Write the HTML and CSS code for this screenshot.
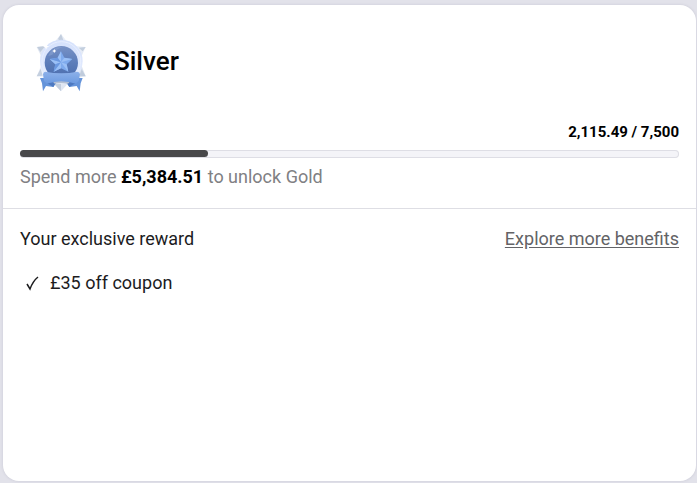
FILE: index.html
```html
<!DOCTYPE html>
<html lang="en">
<head>
    <meta charset="utf-8">
    <title>Silver rewards</title>
    <link rel="stylesheet" href="styles.css">
</head>
<body>
    <main class="card">
        <section class="status">
            <div class="tier">
                <svg class="badge" viewBox="0 0 192 210" aria-hidden="true">
                    <defs>
                        <linearGradient id="ray" x1="0" y1="0" x2="1" y2="1">
                            <stop offset="0" stop-color="#d3dbe9"/>
                            <stop offset=".45" stop-color="#f0f4fc"/>
                            <stop offset="1" stop-color="#cfd9e8"/>
                        </linearGradient>
                        <linearGradient id="ring" x1="0" y1="0" x2="0" y2="1">
                            <stop offset="0" stop-color="#d5e1fc"/>
                            <stop offset="1" stop-color="#e6eeff"/>
                        </linearGradient>
                        <linearGradient id="disc" x1="0" y1="0" x2="0" y2="1">
                            <stop offset="0" stop-color="#7892c6"/>
                            <stop offset=".5" stop-color="#5c7dba"/>
                            <stop offset="1" stop-color="#4a6cad"/>
                        </linearGradient>
                        <linearGradient id="ribbon" x1="0" y1="0" x2="0" y2="1">
                            <stop offset="0" stop-color="#8db1ea"/>
                            <stop offset="1" stop-color="#6c9ae0"/>
                        </linearGradient>
                    </defs>
                    <path d="M93 18L112 42 137 54 167 57 156 82 156 116 167 145 140 150 116 164 93 190 70 164 46 150 20 145 32 116 32 82 20 57 50 54 74 42Z" fill="url(#ray)"/>
                    <path d="M93 18L100 36 93 42 84 33ZM22 57L46 54 31 72ZM167 57L146 59 158 70ZM20 145L32 122 38 143ZM167 145L155 124 148 143ZM72 168H93V190Z" fill="#b7c4d6" opacity=".75"/>
                    <circle cx="94" cy="99" r="64" fill="url(#ring)"/>
                    <circle cx="94" cy="99" r="58" fill="none" stroke="#e8efff" stroke-width="3"/>
                    <circle cx="94" cy="104" r="50" fill="url(#disc)"/>
                    <path d="M54 84Q67 54 99 57Q76 63 67 80Z" fill="#9bb2de" opacity=".35"/>
                    <path d="M93 70L103 89 127 93 110 109 115 131 93 121 71 131 76 109 59 93 83 89Z" fill="#7fabee"/>
                    <path d="M93 70V103L83 89ZM127 93L93 103 103 89ZM115 131L93 103 110 109ZM71 131L93 103V121ZM59 93L93 103 76 109Z" fill="#9bc0f6"/>
                    <path d="M59 93L93 103 83 89ZM71 131L93 103 76 109Z" fill="#6b98e0"/>
                    <path d="M30 150L51 150 78 166 70 177 48 174 39 190 36 166Z" fill="#6594da"/>
                    <path d="M158 150L137 150 110 166 118 177 140 174 149 190 152 166Z" fill="#6594da"/>
                    <path d="M46 162L78 162 70 177ZM142 162L110 162 118 177Z" fill="#4d79c0"/>
                    <path d="M66 158Q94 152 122 158L114 167Q94 163 74 167Z" fill="#b4c0d3"/>
                    <path d="M46 131Q94 140 142 131Q149 132 150 139L146 159 138 167Q94 152 50 167L42 159 39 139Q40 132 46 131Z" fill="url(#ribbon)"/>
                    <path d="M48 46L51 53 57 55 51 58 48 64 45 58 39 55 45 53ZM73 63L75 67 79 69 75 71 73 75 71 71 67 69 71 67Z" fill="#fff"/>
                </svg>
                <h1>Silver</h1>
            </div>
            <div class="amount">2,115.49 / 7,500</div>
            <div class="track" role="progressbar" aria-label="Progress to Gold" aria-valuemin="0" aria-valuemax="7500" aria-valuenow="2115.49">
                <div class="fill" style="width: 28.5%"></div>
            </div>
            <p class="hint">Spend more <strong>£5,384.51</strong> to unlock Gold</p>
        </section>
        <section class="rewards">
            <div class="rewards-head">
                <h2>Your exclusive reward</h2>
                <a href="#">Explore more benefits</a>
            </div>
            <ul>
                <li>
                    <svg class="check" viewBox="0 0 14 16" aria-hidden="true">
                        <path d="M2 9L5 14Q8 6 13 2"/>
                    </svg>
                    £35 off coupon
                </li>
            </ul>
        </section>
    </main>
</body>
</html>
```

FILE: styles.css
```css
* {
    box-sizing: border-box;
}
body {
    margin: 0;
    padding: 5px 1px 2px 3px;
    min-height: 100vh;
    display: flex;
    background-color: #e2e2ea;
    font-family: Roboto, sans-serif;
    font-size: 18px;
    line-height: 24px;
    color: #1c1c1e;
}
.card {
    flex: 1;
    background-color: white;
    border-radius: 16px;
    box-shadow: 0 0 3px rgba(70, 70, 100, 0.15);
}
.status {
    padding: 23px 17px 19px;
    border-bottom: 1px solid #dedee4;
}
.tier {
    display: flex;
    align-items: center;
    gap: 20px;
    padding-left: 10px;
}
.badge {
    width: 64px;
    height: 70px;
}
h1 {
    margin: 0;
    padding-bottom: 4px;
    font-size: 26px;
    font-weight: 500;
    line-height: 32px;
    color: black;
}
.amount {
    margin-top: 22px;
    text-align: right;
    font-size: 15px;
    font-weight: 700;
    color: black;
}
.track {
    height: 8px;
    margin-top: 6px;
    border-radius: 4px;
    background-color: #f4f4f8;
    box-shadow: inset 0 0 0 1px #dedee5;
}
.fill {
    height: 7px;
    border-radius: 4px;
    background-color: #48484a;
}
.hint {
    margin: 7px 0 0;
    color: #808083;
}
.hint strong {
    color: black;
}
.rewards {
    padding: 18px 17px;
}
.rewards-head {
    display: flex;
    justify-content: space-between;
}
h2 {
    margin: 0;
    font-size: 18px;
    font-weight: 400;
}
a {
    color: #636366;
    text-underline-offset: 2px;
}
ul {
    list-style: none;
    margin: 20px 0 0;
    padding: 0 5px;
}
li {
    display: flex;
    align-items: center;
    gap: 11px;
}
.check {
    width: 14px;
    height: 16px;
    fill: none;
    stroke: #1c1c1e;
    stroke-width: 1.5;
}
```
